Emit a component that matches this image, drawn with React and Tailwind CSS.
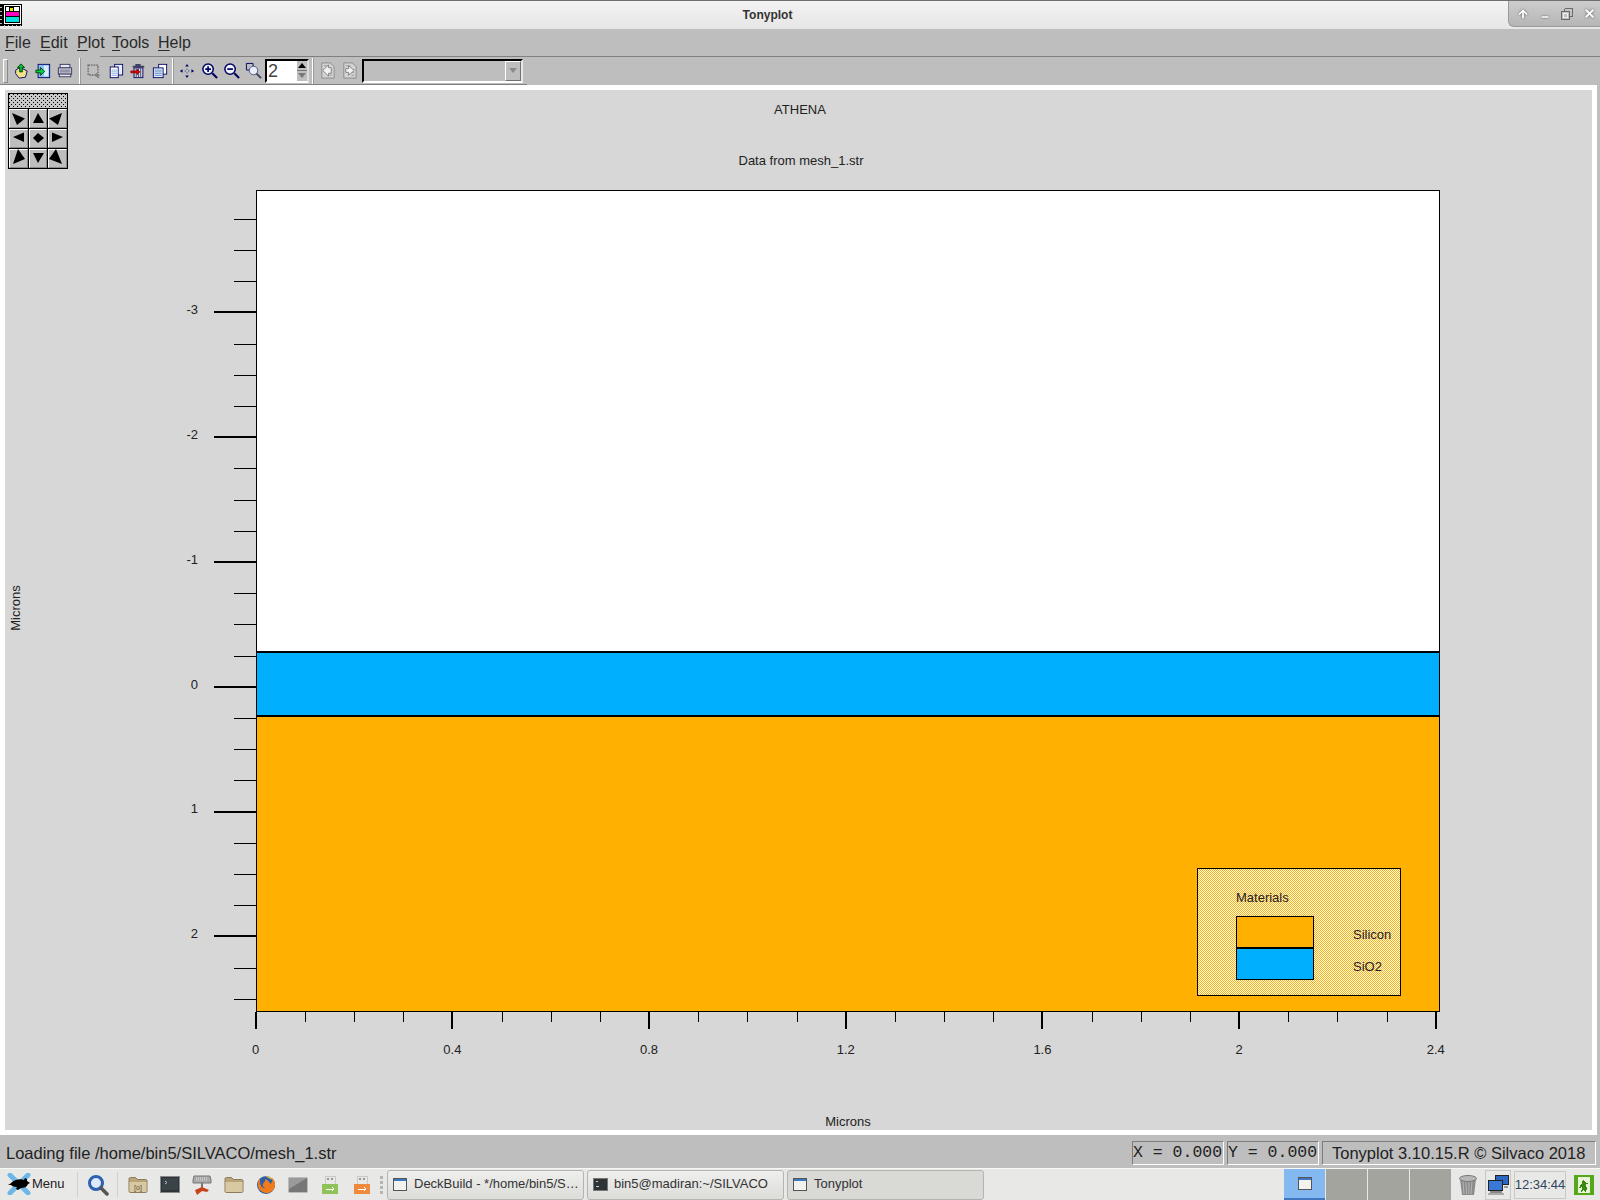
import { ArrowUp, Minus, X } from "lucide-react"

const navy = "#000060"

function WindowIcon() {
  return (
    <svg width="22" height="22" viewBox="0 0 22 22" shapeRendering="crispEdges" className="mt-[3px] shrink-0">
      <rect x="0" y="0" width="22" height="22" fill="#000" />
      <path d="M0 3h2M0 7h2M0 11h2M0 15h2M0 19h2M4 21v1M8 21v1M12 21v1M16 21v1M20 21v1" stroke="#bbb" />
      <rect x="4" y="1" width="17" height="19" fill="#fff" />
      <rect x="5" y="2" width="15" height="17" fill="#000" />
      <rect x="6" y="3" width="13" height="15" fill="#fff" />
      <rect x="9" y="3" width="5" height="4" fill="#000" />
      <rect x="10" y="4" width="3" height="3" fill="#e8e800" />
      <rect x="6" y="7" width="13" height="1" fill="#000" />
      <rect x="6" y="8" width="13" height="4" fill="#ff00c0" />
      <rect x="6" y="12" width="13" height="1" fill="#000" />
      <rect x="6" y="13" width="13" height="5" fill="#00e0e0" />
    </svg>
  )
}

function TitleBar() {
  return (
    <div className="flex h-[29px] shrink-0 border-t border-[#707070] bg-gradient-to-b from-[#f3f3f3] to-[#e6e6e6]">
      <WindowIcon />
      <div className="flex-1 pl-[5px] pt-[7px] text-center text-[12px] leading-[15px] font-bold text-[#333]">Tonyplot</div>
      <div className="flex h-[26px] w-[92px] items-center rounded-bl-[6px] border-b border-l border-[#9a9a9a] bg-gradient-to-b from-[#cdcdcd] to-[#b6b6b6] pl-[3px]">
        <span className="flex w-[22px] justify-center"><ArrowUp size={12} strokeWidth={3.5} className="text-white drop-shadow-[0_0_1px_#555]" /></span>
        <span className="flex w-[22px] justify-center pt-[6px]"><Minus size={10} strokeWidth={3.5} className="text-white drop-shadow-[0_0_1px_#555]" /></span>
        <span className="flex w-[22px] justify-center">
          <svg width="12" height="12" viewBox="0 0 12 12" fill="none" stroke="#6a6a6a" shapeRendering="crispEdges">
            <path d="M3.5 .5h8v8h-3M3.5 .5v3" />
            <rect x=".5" y="3.5" width="8" height="8" strokeWidth="1" />
            <rect x="2.5" y="5.5" width="4" height="4" stroke="#eee" />
          </svg>
        </span>
        <span className="flex w-[22px] justify-center"><X size={13} strokeWidth={3.5} className="text-white drop-shadow-[0_0_1px_#555]" /></span>
      </div>
    </div>
  )
}

function MenuBar() {
  const items = [["F", "ile", "w-[35px]"], ["E", "dit", "w-[37px]"], ["P", "lot", "w-[35px]"], ["T", "ools", "w-[46px]"], ["H", "elp", "w-[40px]"]]
  return (
    <>
      <div className="flex h-[27px] shrink-0 items-center pl-[5px] text-[16px] text-[#2a2a2a]">
        {items.map(([a, b, w]) => (
          <span key={a} className={w}><u className="underline-offset-2">{a}</u>{b}</span>
        ))}
      </div>
      <div className="ml-[100px] h-px shrink-0 bg-[#808080]" />
    </>
  )
}

function Slot({ children }) {
  return <div className="flex h-[27px] w-[22px] shrink-0 items-center justify-center">{children}</div>
}

function Sep({ className }) {
  return <div className={"h-[26px] w-[2px] shrink-0 border-l border-white border-r-[#808080] bg-[#9a9a9a] " + className} />
}

function Ico({ children, size = 16 }) {
  return <svg width={size} height={size} viewBox="0 0 18 18" shapeRendering="geometricPrecision">{children}</svg>
}

function Glass({ inner }) {
  return (
    <Ico size={17}>
      <circle cx="7.5" cy="7.5" r="5.5" fill="#f0f4ff" stroke={navy} strokeWidth="1.6" />
      <path d="M12 12l5 5" stroke={navy} strokeWidth="2.2" />
      {inner}
    </Ico>
  )
}

function PageBack({ dir }) {
  return (
    <Ico size={17}>
      <path d="M3 1h9l4 4v12H3z" fill="#d4d4d4" stroke="#8a8a8a" />
      <path d="M5 4h5M11 14h3M11 11h3M11 8h3" stroke="#9a9a9a" />
      {dir === "l"
        ? <path d="M10 3L4 9l6 6v-3h3V6h-3z" fill="#f2f2f2" stroke="#808080" />
        : <path d="M8 4l6 5-6 5v-3H5V7h3z" fill="#f2f2f2" stroke="#808080" />}
    </Ico>
  )
}

function Toolbar() {
  return (
    <div className="flex h-[28px] w-[527px] shrink-0 items-center border-b border-[#808080] pl-[3px]">
      <div className="h-[24px] w-[5px] shrink-0 border border-[#8a8a8a] border-l-white border-t-white bg-[#c8c8c8]" />
      <div className="w-[2px] shrink-0" />
      <Slot>
        <Ico>
          <path d="M3 8l5-3 8 4-2 7-7 1-4-5z" fill="#f5e08a" stroke={navy} />
          <path d="M9 1L5 5h2.500v5h3V5H13z" fill="#00c040" stroke="#004000" />
        </Ico>
      </Slot>
      <Slot>
        <Ico>
          <rect x="3.500" y="1.500" width="13" height="15" fill="#8cc0f0" stroke={navy} />
          <rect x="10" y="3" width="5" height="12" fill="#d8ecff" />
          <path d="M1 8h5V5l5 4.500-5 4.500v-3H1z" fill="#00d040" stroke="#004000" />
        </Ico>
      </Slot>
      <Slot>
        <Ico>
          <rect x="3.500" y="1.500" width="11" height="4" fill="#e8e8e8" stroke="#303060" />
          <rect x="1.500" y="5.500" width="15" height="7" fill="#d4d4dc" stroke="#303060" />
          <path d="M3 8h12M3 10h12" stroke="#606080" />
          <rect x="2.500" y="12.500" width="13" height="3" fill="#e8e8e8" stroke="#303060" />
        </Ico>
      </Slot>
      <Sep className="ml-[3px]" />
      <div className="w-[2px] shrink-0" />
      <Slot>
        <Ico>
          <rect x="2.500" y="2.500" width="11" height="11" fill="none" stroke="#808080" strokeWidth="2" strokeDasharray="2 1" />
          <path d="M11 11l5 3-2 1 1 2-2 0-1-2-1 1z" fill="#808080" />
        </Ico>
      </Slot>
      <Slot>
        <Ico>
          <rect x="7.500" y="1.500" width="9" height="12" fill="#e4eeff" stroke={navy} />
          <rect x="2.500" y="4.500" width="9" height="12" fill="#fff" stroke={navy} />
          <path d="M4 8h6M4 10h6M4 12h6M4 14h6" stroke="#80a8e0" />
        </Ico>
      </Slot>
      <Slot>
        <Ico>
          <path d="M6 1h6v2h4v2H3V3h3z" fill="#404060" />
          <rect x="4.500" y="5.500" width="10" height="11" fill="#d8d8e0" stroke={navy} />
          <path d="M7 6v10M9.500 6v10M12 6v10" stroke="#404070" />
          <path d="M1 9h7V7l3 3-3 3v-2H1z" fill="#e00000" stroke="#900000" />
        </Ico>
      </Slot>
      <Slot>
        <Ico>
          <rect x="7.500" y="1.500" width="9" height="11" fill="#fff" stroke={navy} />
          <rect x="1.500" y="5.500" width="11" height="11" fill="#e4eeff" stroke={navy} />
          <path d="M3 8h8M3 10h8M3 12h8M3 14h8" stroke="#6088c0" />
        </Ico>
      </Slot>
      <Sep className="ml-px" />
      <div className="w-[2px] shrink-0" />
      <Slot>
        <Ico>
          <path d="M9 1l2 3H7zM9 17l2-3H7zM1 9l3-2v4zM17 9l-3-2v4z" fill={navy} />
          <path d="M9 6l1 1-1 1-1-1zM9 10l1 1-1 1-1-1zM6 9l1-1 1 1-1 1zM10 9l1-1 1 1-1 1z" fill="#5070a0" />
        </Ico>
      </Slot>
      <Slot><Glass inner={<path d="M4.500 7.500h6M7.500 4.500v6" stroke={navy} strokeWidth="1.800" />} /></Slot>
      <Slot><Glass inner={<path d="M4.500 7.500h6" stroke={navy} strokeWidth="1.800" />} /></Slot>
      <Slot>
        <Ico size={17}>
          <path d="M1.500 1.500h7v7h-7z" fill="none" stroke={navy} />
          <circle cx="9" cy="9" r="4.500" fill="#e8eef8" stroke="#505080" />
          <path d="M12 12l5 5" stroke="#404060" strokeWidth="2" />
        </Ico>
      </Slot>
      <div className="ml-px flex h-[24px] w-[44px] shrink-0 border-2 border-t-black border-l-black border-r-[#dcdcdc] border-b-white bg-white">
        <span className="flex-1 pl-px text-[18px] leading-[21px] text-[#444]">2</span>
        <div className="flex w-[10px] flex-col bg-[#bebebe]">
          <div className="flex flex-1 items-center justify-center border-b border-[#777]"><div className="h-0 w-0 border-x-[4px] border-b-[5px] border-x-transparent border-b-black" /></div>
          <div className="flex flex-1 items-center justify-center"><div className="h-0 w-0 border-x-[4px] border-t-[5px] border-x-transparent border-t-[#777]" /></div>
        </div>
      </div>
      <Sep className="ml-[3px]" />
      <div className="w-[2px] shrink-0" />
      <Slot><PageBack dir="l" /></Slot>
      <Slot><PageBack dir="r" /></Slot>
      <div className="ml-[2px] flex h-[24px] w-[161px] shrink-0 justify-end border-2 border-t-black border-l-black border-r-[#e8e8e8] border-b-white bg-[#bebebe]">
        <div className="flex w-[16px] items-center justify-center border border-r-[#707070] border-b-[#707070] border-t-white border-l-white">
          <div className="h-0 w-0 border-x-[4px] border-t-[5px] border-x-transparent border-t-[#8a8a8a]" />
        </div>
      </div>
    </div>
  )
}

function Nav() {
  const arrows = ["4,5 17,10.5 9,17", "10,5 5,15 16,15", "15,5 2,10.5 11,17", "5,9 16,4.5 16,14", "10,5 16,10 10,15 5,10", "16,9 5,4.5 5,14", "10,1 17,11 5,16", "5,5 16,5 10,15", "9,1 2,11 15,16"]
  return (
    <div className="absolute top-[3px] left-[3px] w-[60px] border border-black bg-black">
      <svg width="58" height="14" className="block" shapeRendering="crispEdges">
        <defs>
          <pattern id="dots" width="4" height="4" patternUnits="userSpaceOnUse">
            <rect width="4" height="4" fill="#c8c8c8" />
            <rect width="1" height="1" fill="#000" />
            <rect x="2" y="2" width="1" height="1" fill="#000" />
          </pattern>
        </defs>
        <rect width="58" height="14" fill="url(#dots)" />
      </svg>
      <div className="mt-px grid grid-cols-3 gap-px">
        {arrows.map(p => (
          <div key={p} className="h-[19px] border border-t-white border-l-white border-r-[#8a8a8a] border-b-[#8a8a8a] bg-[#bebebe]">
            <svg width="19" height="19" viewBox="1 1 19 19" className="-mt-px -ml-px"><polygon points={p} fill="#000" /></svg>
          </div>
        ))}
      </div>
    </div>
  )
}

function Plot() {
  const yTicks = []
  for (let n = -15; n <= 10; n++) yTicks.push(n)
  const xTicks = []
  for (let i = 0; i <= 24; i++) xTicks.push(i)
  const yLabels = [["-3", 309], ["-2", 433.5], ["-1", 559], ["0", 684], ["1", 808], ["2", 933]]
  const xLabels = [["0", 0], ["0.4", 4], ["0.8", 8], ["1.2", 12], ["1.6", 16], ["2", 20], ["2.4", 24]]

  return (
    <svg width="1587" height="1040" viewBox="5 90 1587 1040" className="block text-[13px]" fill="#222">
      <defs>
        <pattern id="dither" width="2" height="2" patternUnits="userSpaceOnUse">
          <rect width="2" height="2" fill="#fff" />
          <rect width="1" height="1" fill="#ffb000" />
          <rect x="1" y="1" width="1" height="1" fill="#ffb000" />
        </pattern>
      </defs>
      <text x="800" y="114" textAnchor="middle">ATHENA</text>
      <text x="801" y="165" textAnchor="middle">Data from mesh_1.str</text>

      <g shapeRendering="crispEdges">
        <rect x="256.500" y="190.500" width="1183" height="821" fill="#fff" stroke="#000" />
        <rect x="257" y="652" width="1182" height="64" fill="#00b0ff" />
        <rect x="257" y="716" width="1182" height="295" fill="#ffb000" />
        <path d="M257 652h1182M257 716h1182" stroke="#000" strokeWidth="2" />

        {yTicks.map(n => {
          const y = Math.round(686.8 + n * 31.2)
          return n % 4 === 0
            ? <rect key={n} x="214" y={y - 1} width="42" height="2" fill="#000" />
            : <rect key={n} x="234" y={y} width="22" height="1" fill="#000" />
        })}
        {xTicks.map(i => {
          const x = Math.round(255.7 + i * 49.17)
          return i % 4 === 0
            ? <rect key={i} x={x - 1} y="1012" width="2" height="17" fill="#000" />
            : <rect key={i} x={x} y="1012" width="1" height="10" fill="#000" />
        })}

        <rect x="1197.500" y="868.500" width="203" height="127" fill="url(#dither)" stroke="#000" />
        <rect x="1236.500" y="916.500" width="77" height="32" fill="#ffb000" stroke="#000" />
        <rect x="1236.500" y="948.500" width="77" height="31" fill="#00b0ff" stroke="#000" />
        <path d="M1236 948h78" stroke="#000" strokeWidth="2" />
      </g>

      {yLabels.map(([t, y]) => <text key={t} x="198" y={y + 5} textAnchor="end">{t}</text>)}
      {xLabels.map(([t, i]) => <text key={t} x={255.7 + i * 49.17} y="1054" textAnchor="middle">{t}</text>)}

      <text x="848" y="1126" textAnchor="middle">Microns</text>
      <text transform="translate(20 608) rotate(-90)" textAnchor="middle">Microns</text>

      <text x="1236" y="902">Materials</text>
      <text x="1353" y="939">Silicon</text>
      <text x="1353" y="971">SiO2</text>
    </svg>
  )
}

function Panel({ className, children }) {
  return (
    <div className={"h-[24px] shrink-0 border border-t-[#7c7c7c] border-l-[#7c7c7c] border-r-white border-b-white leading-[22px] whitespace-pre " + className}>
      {children}
    </div>
  )
}

function StatusBar() {
  return (
    <div className="flex h-[33px] shrink-0 items-end pb-[3px] text-[16.5px] text-[#222]">
      <span className="flex-1 self-center pt-[6px] pl-[6px]">Loading file /home/bin5/SILVACO/mesh_1.str</span>
      <Panel className="w-[92px] font-['Liberation_Mono',monospace]">X = 0.000</Panel>
      <Panel className="ml-[3px] w-[92px] font-['Liberation_Mono',monospace]">Y = 0.000</Panel>
      <Panel className="mr-[4px] ml-[3px] w-[274px] pl-[9px]">Tonyplot 3.10.15.R © Silvaco 2018</Panel>
    </div>
  )
}

function MouseLogo() {
  return (
    <svg width="24" height="22" viewBox="0 0 24 22">
      <path d="M3 2l18 18M21 2L3 20" stroke="#6db6e8" strokeWidth="5" strokeLinecap="round" />
      <path d="M1 12c3-1 4-4 8-5 3-1 6-1 8 0l1-2 2 1 0 2 3 2-2 1c-1 3-4 4-7 4l-3 2-2-1 1-2c-3 0-5-1-6-2z" fill="#000" />
    </svg>
  )
}

function Folder({ children }) {
  return (
    <svg width="20" height="18" viewBox="0 0 20 18">
      <path d="M1 3q0-1.500 1.500-1.500h5l2 2h8q1.500 0 1.500 1.500v10q0 1.500-1.500 1.500h-15q-1.500 0-1.500-1.500z" fill="#b9a47c" stroke="#8c7a58" />
      <path d="M1.500 6h17v9q0 1-1 1h-15q-1 0-1-1z" fill="#d9c9a3" />
      {children}
    </svg>
  )
}

function Usb({ color }) {
  return (
    <svg width="18" height="20" viewBox="0 0 18 20" shapeRendering="crispEdges">
      <rect x="4" y="1" width="10" height="8" fill="#e8e8e4" stroke="#c8c8c4" />
      <rect x="6" y="3" width="2" height="2" fill="#999" />
      <rect x="10" y="3" width="2" height="2" fill="#999" />
      <rect x="1" y="9" width="16" height="10" fill={color} />
      <path d="M5 14h8M11 12l2 2-2 2" stroke="#fff" fill="none" />
    </svg>
  )
}

function Launchers() {
  const icons = [
    <Folder key="a"><text x="10" y="14" textAnchor="middle" className="text-[7px]" fill="#5c4c30">[o]</text></Folder>,
    <svg key="b" width="20" height="18" viewBox="0 0 20 18">
      <rect x=".5" y=".5" width="19" height="16" fill="#2e3436" stroke="#888" />
      <rect x="2" y="2" width="16" height="12" fill="#3a4448" />
      <path d="M5 5l2 1.500-2 1.500" stroke="#bbb" fill="none" />
    </svg>,
    <svg key="c" width="20" height="22" viewBox="0 0 20 22">
      <path d="M2 2h16l1 4v3H1V6z" fill="#a8a8a8" stroke="#777" />
      <path d="M4 4h12M4 6h12" stroke="#e0e0e0" strokeDasharray="1 1" />
      <rect x="9" y="9" width="2" height="6" fill="#777" />
      <path d="M3 16l7-3 7 3-2 2-5-1-5 4z" fill="#c8421c" />
    </svg>,
    <Folder key="d" />,
    <svg key="e" width="20" height="20" viewBox="0 0 20 20">
      <circle cx="10" cy="10" r="9" fill="#2c5fa8" />
      <path d="M4 3c-3 4-3 10 1 13 4 3 10 3 13-2 2-4 1-9-2-11 1 3 0 5-2 6 0-2-2-4-5-5 1 2-1 3-2 5-1 2 1 4 3 4-3 1-6-2-6-6 0-1 0-3 0-4z" fill="#f07a1c" />
      <path d="M9 1c3 0 6 1 8 4-2-1-5-2-8-4z" fill="#f8c020" />
    </svg>,
    <svg key="f" width="20" height="16" viewBox="0 0 20 16">
      <rect x=".5" y=".5" width="19" height="15" rx="1" fill="#777" stroke="#bbb" />
      <path d="M1 1h18L1 12z" fill="#9a9a9a" />
    </svg>,
    <Usb key="g" color="#8fc35a" />,
    <Usb key="h" color="#ef8a3c" />,
  ]
  return (
    <div className="ml-[4px] flex w-[256px] shrink-0">
      {icons.map((ic, i) => <div key={i} className="flex w-[32px] items-center justify-center">{ic}</div>)}
    </div>
  )
}

function WinIcon() {
  return (
    <svg width="14" height="13" viewBox="0 0 14 13" shapeRendering="crispEdges">
      <rect x=".5" y=".5" width="13" height="12" fill="#f2f2ee" stroke="#555" />
      <rect x="1" y="1" width="12" height="2" fill="#3f78c0" />
    </svg>
  )
}

function TermIcon() {
  return (
    <svg width="15" height="13" viewBox="0 0 15 13" shapeRendering="crispEdges">
      <rect x=".5" y=".5" width="14" height="12" fill="#2e3436" stroke="#777" />
      <path d="M3 3h2M3 8h3" stroke="#ccc" />
    </svg>
  )
}

function TaskBtn({ icon, children, active }) {
  return (
    <div className={"flex h-[30px] w-[197px] shrink-0 items-center overflow-hidden rounded-[3px] border border-[#b4b4b0] pb-[2px] pl-[5px] " + (active ? "bg-[#d9d9d6]" : "bg-gradient-to-b from-[#efefed] to-[#dcdcd9]")}>
      <span className="flex w-[21px] shrink-0">{icon}</span>
      <span className="whitespace-nowrap">{children}</span>
    </div>
  )
}

function Taskbar() {
  return (
    <div className="flex h-[32px] shrink-0 items-end border-t border-[#f8f8f6] bg-[#e8e8e6] text-[13px] text-[#333]">
      <div className="flex h-full w-[77px] shrink-0 items-center pb-[2px] pl-[7px]">
        <MouseLogo />
        <span className="ml-px text-[#222]">Menu</span>
      </div>
      <div className="my-[3px] h-[25px] w-px shrink-0 self-center bg-[#d0d0ce]" />
      <div className="flex h-full w-[39px] shrink-0 items-center justify-center">
        <svg width="22" height="22" viewBox="0 0 22 22">
          <circle cx="9" cy="9" r="6.500" fill="#dbe9f8" stroke="#2f5fb0" strokeWidth="3" />
          <path d="M14 14l6 6" stroke="#555" strokeWidth="3.500" strokeLinecap="round" />
        </svg>
      </div>
      <div className="h-[25px] w-px shrink-0 self-center bg-[#d0d0ce]" />
      <div className="flex h-full self-stretch"><Launchers /></div>
      <div className="mr-[4px] ml-[2px] flex h-full w-[3px] shrink-0 flex-col items-center justify-center gap-[2px]">
        <div className="h-[3px] w-[3px] bg-[#b4b4b0]" />
        <div className="h-[3px] w-[3px] bg-[#b4b4b0]" />
        <div className="h-[3px] w-[3px] bg-[#b4b4b0]" />
        <div className="h-[3px] w-[3px] bg-[#b4b4b0]" />
      </div>
      <div className="flex gap-[3px] self-end">
        <TaskBtn icon={<WinIcon />}>DeckBuild - */home/bin5/S…</TaskBtn>
        <TaskBtn icon={<TermIcon />}>bin5@madiran:~/SILVACO</TaskBtn>
        <TaskBtn icon={<WinIcon />} active>Tonyplot</TaskBtn>
      </div>
      <div className="ml-auto flex h-[31px] shrink-0 gap-px">
        <div className="flex w-[41px] items-center justify-center border-b-2 border-[#3f78c0] bg-[#84b8f0]"><WinIcon /></div>
        <div className="w-[41px] bg-[#a3a49e]" />
        <div className="w-[41px] bg-[#a3a49e]" />
        <div className="w-[41px] bg-[#a3a49e]" />
      </div>
      <div className="flex h-full w-[34px] shrink-0 items-center justify-center">
        <svg width="20" height="22" viewBox="0 0 20 22">
          <path d="M2 5h16l-2 16H4z" fill="#8c8c8c" />
          <path d="M5 7l1 13M8 7l.5 13M11 7l-.2 13M14 7l-1 13" stroke="#b4b4b4" />
          <ellipse cx="10" cy="4.500" rx="8.500" ry="3" fill="#b8b8b8" stroke="#777" />
        </svg>
      </div>
      <div className="flex h-[30px] w-[26px] shrink-0 items-center justify-center border border-[#c8c8c4]">
        <svg width="22" height="22" viewBox="0 0 22 22" shapeRendering="crispEdges">
          <rect x="8" y="1" width="13" height="9" fill="#2c66c0" stroke="#222" />
          <rect x="1" y="6" width="14" height="10" fill="#3a78d8" stroke="#222" />
          <rect x="3" y="17" width="12" height="2" fill="#888" />
          <rect x="1" y="19" width="16" height="2" fill="#aaa" />
          <rect x="17" y="12" width="4" height="2" fill="#999" />
        </svg>
      </div>
      <div className="mb-px ml-[3px] flex h-[28px] w-[52px] shrink-0 items-center justify-center border border-[#c8c8c4] text-[#2f4560]">12:34:44</div>
      <div className="mr-[6px] ml-[8px] flex h-full w-[20px] shrink-0 items-center">
        <svg width="20" height="20" viewBox="0 0 20 20" shapeRendering="crispEdges">
          <rect width="20" height="20" fill="#55a81c" />
          <rect x="4" y="2" width="12" height="16" fill="#e8f4d8" />
          <path d="M9 5l3 3 3 1-3 0 1 5-2 4-1-4-3 4 1-6-3 1 3-5z" fill="#3b8a10" />
        </svg>
      </div>
    </div>
  )
}

export default function App() {
  return (
    <div className="flex h-[1200px] w-[1600px] flex-col overflow-hidden bg-[#bebebe] font-['Liberation_Sans',Arial,sans-serif]">
      <TitleBar />
      <MenuBar />
      <Toolbar />
      <div className="relative mr-[3px] h-[1050px] shrink-0 border-[5px] border-white bg-[#d7d7d7]">
        <Plot />
        <Nav />
      </div>
      <StatusBar />
      <Taskbar />
    </div>
  )
}
